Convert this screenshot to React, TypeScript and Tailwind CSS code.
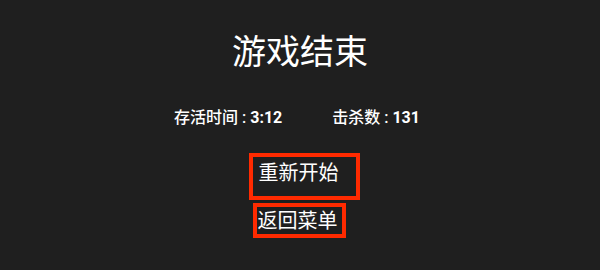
export default function App() {
  return (
    <div
      className="w-[600px] h-[270px] bg-[#1f1f1f] text-white flex flex-col items-center overflow-hidden"
      style={{ fontFamily: 'Roboto, "Noto Sans CJK SC", sans-serif' }}
    >
      {/* Title */}
      <h1 className="mt-[31px] text-[34px] leading-[42px] font-normal">游戏结束</h1>

      {/* Stats */}
      <div className="mt-[35px] flex items-center gap-[50px] text-[16px] leading-[20px] font-medium pr-[6px]">
        <span>存活时间 : <span className="font-bold">3:12</span></span>
        <span>击杀数 : <span className="font-bold">131</span></span>
      </div>

      {/* Buttons */}
      <div className="mt-[25px] flex flex-col items-center">
        <button className="ml-[8px] w-[111px] h-[47px] border-[4px] border-[#ff2a00] text-[20px] leading-[26px] text-left pl-[6px] pb-[8px]">
          重新开始
        </button>
        <button className="mt-[3px] ml-[-2px] w-[93px] h-[35px] border-[4px] border-[#ff2a00] text-[20px] leading-[26px] text-left pl-[1px]">
          返回菜单
        </button>
      </div>
    </div>
  );
}
